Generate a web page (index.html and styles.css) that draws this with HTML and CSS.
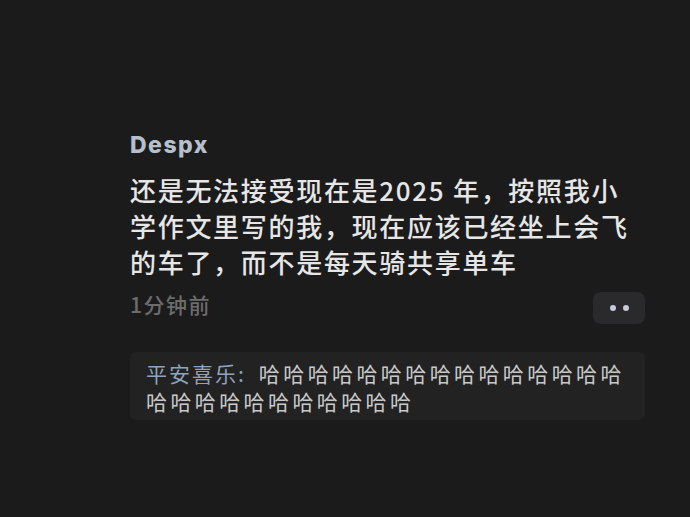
FILE: index.html
```html
<!DOCTYPE html>
<html lang="zh-CN">
<head>
    <meta charset="UTF-8">
    <meta name="viewport" content="width=device-width, initial-scale=1.0">
    <title>评论</title>
    <link rel="stylesheet" href="styles.css">
</head>
<body>
    <div class="comment">
        <div class="comment-user">Despx</div>
        <div class="comment-text">还是无法接受现在是2025 年，按照我小学作文里写的我，现在应该已经坐上会飞的车了，而不是每天骑共享单车</div>
        <div class="comment-meta">
            <span class="comment-time">1分钟前</span>
            <button class="more-btn" aria-label="更多">
                <span class="dot"></span>
                <span class="dot"></span>
            </button>
        </div>
        <div class="reply-box">
            <span class="reply-name">平安喜乐:</span>哈哈哈哈哈哈哈哈哈哈哈哈哈哈哈哈哈哈哈哈哈哈哈哈哈哈
        </div>
    </div>
</body>
</html>
```

FILE: styles.css
```css
body {
    margin: 0;
    padding: 0;
    min-height: 100vh;
    background-color: #1b1b1b;
    font-family: "Noto Sans CJK SC", "Noto Sans", sans-serif;
}

.comment {
    width: 515px;
    padding: 130px 0 0 130px;
}

.comment-user {
    font-family: Inter, "Noto Sans CJK SC", sans-serif;
    font-size: 23px;
    font-weight: 800;
    line-height: 30px;
    letter-spacing: 1.5px;
    color: #b6c0cd;
}

.comment-text {
    margin-top: 12px;
    width: 507px;
    font-size: 26px;
    font-weight: 500;
    line-height: 36px;
    letter-spacing: 1.7px;
    color: #e6e6e6;
}

.comment-meta {
    display: flex;
    justify-content: space-between;
    align-items: center;
    margin-top: 12px;
}

.comment-time {
    font-size: 21px;
    font-weight: 500;
    letter-spacing: 1.5px;
    color: #6c6c6c;
    margin-top: -8px;
}

.more-btn {
    display: flex;
    justify-content: center;
    align-items: center;
    gap: 7px;
    width: 52px;
    height: 32px;
    padding: 0;
    border: none;
    border-radius: 8px;
    background-color: #2a2a2c;
}

.dot {
    width: 6px;
    height: 6px;
    border-radius: 50%;
    background-color: #c6cadb;
}

.reply-box {
    margin-top: 28px;
    padding: 7px 12px 5px 16px;
    border-radius: 6px;
    background-color: #222222;
    font-size: 21px;
    line-height: 28px;
    letter-spacing: 3.4px;
    color: #c9c9c9;
}

.reply-name {
    display: inline-block;
    margin-right: 13px;
    color: #8ea3bd;
    letter-spacing: 2px;
}
```
